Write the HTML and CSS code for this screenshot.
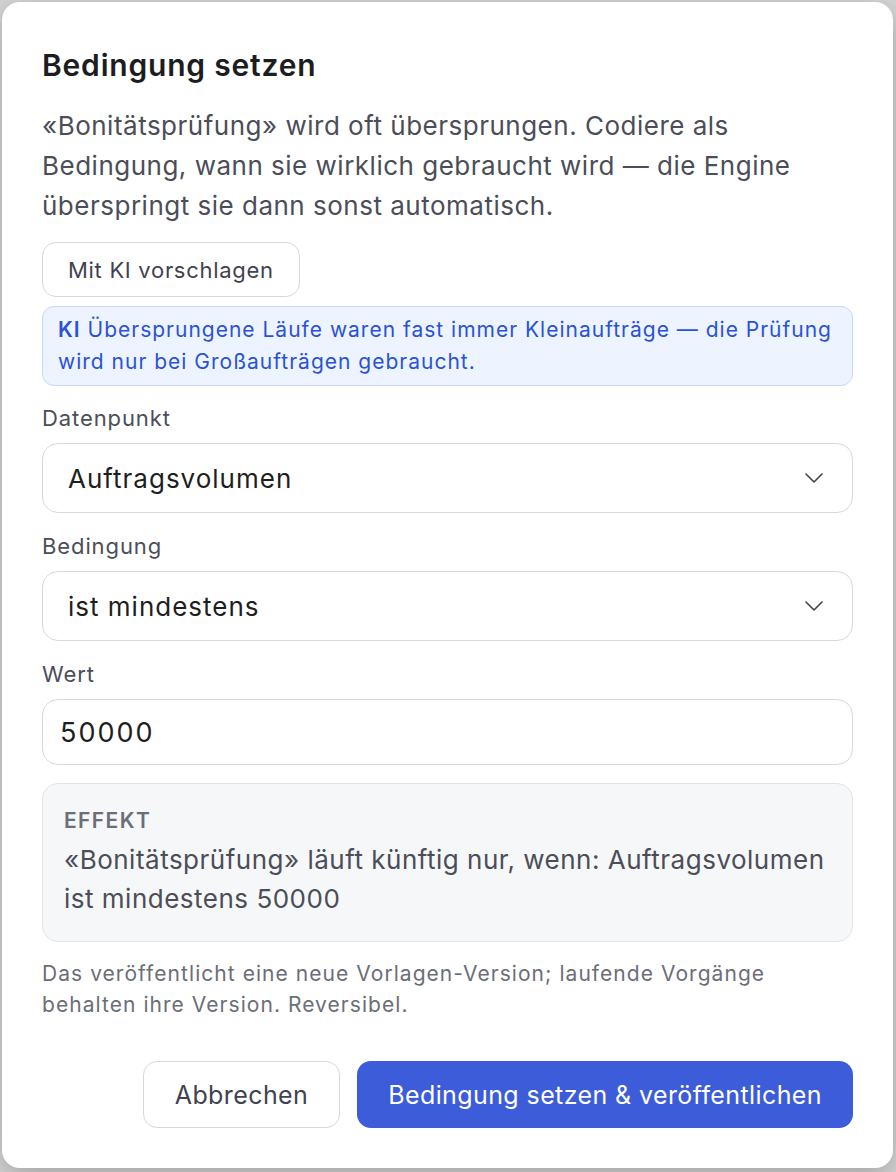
FILE: index.html
```html
<!DOCTYPE html>
<html lang="de">
<head>
<meta charset="utf-8">
<link rel="stylesheet" href="styles.css">
</head>
<body>
<div class="dialog">
  <h1 class="title">Bedingung setzen</h1>
  <p class="intro">«Bonitätsprüfung» wird oft übersprungen. Codiere als Bedingung, wann sie wirklich gebraucht wird — die Engine überspringt sie dann sonst automatisch.</p>
  <div class="ai-row"><button class="btn-ghost">Mit KI vorschlagen</button></div>
  <div class="ai-box"><b class="ai-tag">KI</b> Übersprungene Läufe waren fast immer Kleinaufträge — die Prüfung wird nur bei Großaufträgen gebraucht.</div>

  <div class="field">
    <div class="label">Datenpunkt</div>
    <div class="select"><span>Auftragsvolumen</span>
      <svg class="chev" width="20" height="12" viewBox="0 0 20 12"><path d="M2 2 L10 10 L18 2" fill="none" stroke="#3d404a" stroke-width="1.6" stroke-linecap="round" stroke-linejoin="round"/></svg>
    </div>
  </div>
  <div class="field">
    <div class="label">Bedingung</div>
    <div class="select"><span>ist mindestens</span>
      <svg class="chev" width="20" height="12" viewBox="0 0 20 12"><path d="M2 2 L10 10 L18 2" fill="none" stroke="#3d404a" stroke-width="1.6" stroke-linecap="round" stroke-linejoin="round"/></svg>
    </div>
  </div>
  <div class="field">
    <div class="label">Wert</div>
    <div class="input">50000</div>
  </div>

  <div class="effect">
    <div class="effect-head">EFFEKT</div>
    <div class="effect-text">«Bonitätsprüfung» läuft künftig nur, wenn: Auftragsvolumen ist mindestens 50000</div>
  </div>

  <p class="note">Das veröffentlicht eine neue Vorlagen-Version; laufende Vorgänge behalten ihre Version. Reversibel.</p>

  <div class="actions">
    <button class="btn-cancel">Abbrechen</button>
    <button class="btn-primary">Bedingung setzen &amp; veröffentlichen</button>
  </div>
</div>
</body>
</html>
```
FILE: styles.css
```css
html, body {
  margin: 0;
  padding: 0;
  height: 100%;
}
body {
  background: #d6d6d6;
  font-family: Inter, "Noto Sans", sans-serif;
  padding: 2px 3px 4px 2px;
  box-sizing: border-box;
}
.dialog {
  background: #fff;
  border-radius: 18px;
  height: 100%;
  box-sizing: border-box;
  padding: 43px 40px 0 40px;
  box-shadow: 0 8px 30px rgba(0,0,0,0.25);
}
.title {
  margin: 0;
  font-size: 30px;
  font-weight: 600;
  letter-spacing: 0.8px;
  color: #1c1d21;
  line-height: 40px;
}
.intro {
  margin: 21px 0 0 0;
  font-size: 26px;
  letter-spacing: 0.5px;
  line-height: 40px;
  color: #4b4e58;
}
.ai-row {
  margin-top: 16px;
  display: flex;
}
.btn-ghost {
  font-family: inherit;
  font-size: 22px;
  letter-spacing: 0.7px;
  color: #3f4250;
  background: #fff;
  border: 1.5px solid #d8d8dc;
  border-radius: 14px;
  height: 55px;
  padding: 0 25px;
}
.ai-box {
  margin-top: 9px;
  background: #eef4ff;
  border: 1.5px solid #c8d6fb;
  border-radius: 12px;
  color: #2a52d6;
  font-size: 21px;
  letter-spacing: 1px;
  line-height: 32px;
  padding: 7px 15px;
}
.ai-tag {
  font-weight: 600;
}
.field {
  margin-top: 18px;
}
.field + .field {
  margin-top: 19px;
}
.label {
  font-size: 22px;
  letter-spacing: 0.9px;
  line-height: 28px;
  color: #4b4e58;
}
.select, .input {
  margin-top: 11px;
  border: 1.5px solid #d9d9dc;
  border-radius: 16px;
  height: 70px;
  box-sizing: border-box;
  display: flex;
  align-items: center;
  justify-content: space-between;
  padding: 0 28px 0 25px;
  font-size: 26px;
  letter-spacing: 1px;
  color: #1d1e22;
}
.input {
  height: 66px;
  padding-left: 17px;
  font-size: 27px;
  letter-spacing: 2px;
}
.effect {
  margin-top: 18px;
  background: #f6f7f9;
  border: 1.5px solid #e3e4e8;
  border-radius: 16px;
  padding: 22px 21px 23px 21px;
}
.effect-head {
  font-size: 21px;
  font-weight: 600;
  color: #6b6e78;
  letter-spacing: 1.4px;
  line-height: 30px;
}
.effect-text {
  margin-top: 4px;
  font-size: 26px;
  letter-spacing: 0.5px;
  line-height: 39px;
  color: #4b4e58;
}
.note {
  margin: 16px 0 0 0;
  font-size: 21px;
  letter-spacing: 1.05px;
  line-height: 31px;
  color: #6b6e78;
}
.actions {
  margin-top: 41px;
  display: flex;
  justify-content: flex-end;
  gap: 17px;
}
.btn-cancel, .btn-primary {
  font-family: inherit;
  font-size: 25px;
  letter-spacing: 0.4px;
  height: 67px;
  border-radius: 14px;
  padding: 0 31px;
}
.btn-cancel {
  background: #fff;
  border: 1.5px solid #d8d8dc;
  color: #3f4250;
}
.btn-primary {
  background: #3c5cd9;
  border: none;
  color: #fff;
}
```
